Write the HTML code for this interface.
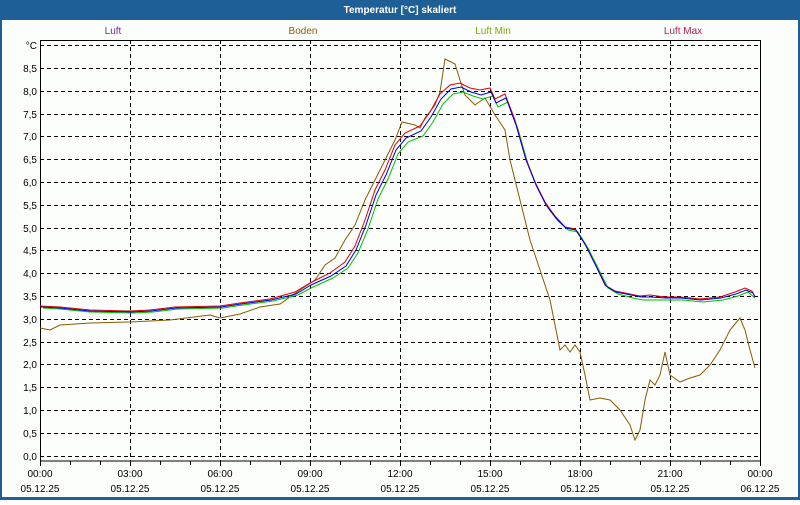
<!DOCTYPE html>
<html><head><style>
body{margin:0;width:800px;height:500px;overflow:hidden;background:#fff;font-family:"Liberation Sans",sans-serif}
</style></head><body>
<svg width="800" height="500" xmlns="http://www.w3.org/2000/svg" font-family="Liberation Sans, sans-serif" font-size="10">
<rect x="0" y="0" width="800" height="500" fill="#1e5f96"/>
<rect x="2" y="20" width="796" height="477" fill="#fcfefc"/>
<text x="400" y="13" text-anchor="middle" fill="#fff" font-weight="bold" font-size="10">Temperatur [°C] skaliert</text>
<text x="113" y="34" text-anchor="middle" fill="#6a2a9a">Luft</text>
<text x="303" y="34" text-anchor="middle" fill="#8a5a10">Boden</text>
<text x="493" y="34" text-anchor="middle" fill="#7fa800">Luft Min</text>
<text x="683" y="34" text-anchor="middle" fill="#b02050">Luft Max</text>
<g stroke="#000" stroke-dasharray="4,3" stroke-width="1">
<line x1="40" y1="45.5" x2="760" y2="45.5"/><line x1="40" y1="68.5" x2="760" y2="68.5"/><line x1="40" y1="91.5" x2="760" y2="91.5"/><line x1="40" y1="114.5" x2="760" y2="114.5"/><line x1="40" y1="136.5" x2="760" y2="136.5"/><line x1="40" y1="159.5" x2="760" y2="159.5"/><line x1="40" y1="182.5" x2="760" y2="182.5"/><line x1="40" y1="205.5" x2="760" y2="205.5"/><line x1="40" y1="228.5" x2="760" y2="228.5"/><line x1="40" y1="250.5" x2="760" y2="250.5"/><line x1="40" y1="273.5" x2="760" y2="273.5"/><line x1="40" y1="296.5" x2="760" y2="296.5"/><line x1="40" y1="319.5" x2="760" y2="319.5"/><line x1="40" y1="342.5" x2="760" y2="342.5"/><line x1="40" y1="364.5" x2="760" y2="364.5"/><line x1="40" y1="387.5" x2="760" y2="387.5"/><line x1="40" y1="410.5" x2="760" y2="410.5"/><line x1="40" y1="433.5" x2="760" y2="433.5"/><line x1="40" y1="456.5" x2="760" y2="456.5"/>
<line x1="130.5" y1="40" x2="130.5" y2="461"/><line x1="220.5" y1="40" x2="220.5" y2="461"/><line x1="310.5" y1="40" x2="310.5" y2="461"/><line x1="400.5" y1="40" x2="400.5" y2="461"/><line x1="490.5" y1="40" x2="490.5" y2="461"/><line x1="580.5" y1="40" x2="580.5" y2="461"/><line x1="670.5" y1="40" x2="670.5" y2="461"/>
</g>
<rect x="40.5" y="40.5" width="720" height="420.5" fill="none" stroke="#000"/>
<g stroke="#000"><path d="M40.5 461v5M70.5 461v4M100.5 461v4M130.5 461v5M160.5 461v4M190.5 461v4M220.5 461v5M250.5 461v4M280.5 461v4M310.5 461v5M340.5 461v4M370.5 461v4M400.5 461v5M430.5 461v4M460.5 461v4M490.5 461v5M520.5 461v4M550.5 461v4M580.5 461v5M610.5 461v4M640.5 461v4M670.5 461v5M700.5 461v4M730.5 461v4M760.5 461v5"/></g>
<g fill="#000" text-anchor="end">
<text x="37" y="49">°C</text><text x="37" y="72">8,5</text><text x="37" y="95">8,0</text><text x="37" y="118">7,5</text><text x="37" y="140">7,0</text><text x="37" y="163">6,5</text><text x="37" y="186">6,0</text><text x="37" y="209">5,5</text><text x="37" y="232">5,0</text><text x="37" y="254">4,5</text><text x="37" y="277">4,0</text><text x="37" y="300">3,5</text><text x="37" y="323">3,0</text><text x="37" y="346">2,5</text><text x="37" y="368">2,0</text><text x="37" y="391">1,5</text><text x="37" y="414">1,0</text><text x="37" y="437">0,5</text><text x="37" y="460">0,0</text>
</g>
<g fill="#000" text-anchor="middle">
<text x="40" y="477">00:00</text><text x="130" y="477">03:00</text><text x="220" y="477">06:00</text><text x="310" y="477">09:00</text><text x="400" y="477">12:00</text><text x="490" y="477">15:00</text><text x="580" y="477">18:00</text><text x="670" y="477">21:00</text><text x="760" y="477">00:00</text>
<text x="40" y="492">05.12.25</text><text x="130" y="492">05.12.25</text><text x="220" y="492">05.12.25</text><text x="310" y="492">05.12.25</text><text x="400" y="492">05.12.25</text><text x="490" y="492">05.12.25</text><text x="580" y="492">05.12.25</text><text x="670" y="492">05.12.25</text><text x="760" y="492">06.12.25</text>
</g>
<polyline fill="none" stroke="#8a5a00" points="40,328 50,330 60,325 90,323 130,322 170,320 210,315 220,318 240,314 260,307 280,304 300,290 315,280 325,265 335,258 345,240 355,225 365,200 375,180 385,160 395,140 402,122 415,125 420,128 425,118 435,105 440,92 445,59 455,64 460,80 465,95 475,105 485,98 495,115 505,130 510,160 520,200 530,240 540,270 550,300 555,325 560,350 565,345 570,352 575,345 580,352 585,375 590,400 600,398 610,400 620,410 630,425 635,440 640,430 645,400 650,380 655,385 660,375 665,352 670,375 680,382 690,378 700,375 710,365 720,350 730,330 740,318 745,330 750,350 755,368"/>
<polyline fill="none" stroke="#00c000" points="43,308 60,309 90,312 133,313 153,312 178,309 223,308 243,305 273,301 298,295 313,287 333,278 348,268 358,253 368,229 378,199 388,179 398,154 408,142 423,136 433,122 443,104 453,94 463,92 473,96 483,99 493,96 498,107 508,102 518,129 528,164 538,189 548,208 558,221 568,230 578,232 588,248 598,268 608,288 618,294 633,298 643,300 653,300 668,300 683,300 703,302 723,300 738,296 748,292 755,298"/>
<polyline fill="none" stroke="#e00000" points="40,306 60,307 90,310 130,311 150,310 175,307 220,306 240,303 270,299 295,292 310,283 330,273 345,262 355,246 365,220 375,190 385,170 395,145 405,133 420,126 430,112 440,94 450,85 460,83 470,88 480,90 490,88 495,99 505,94 515,120 525,156 535,182 545,202 555,216 565,227 575,229 585,244 595,264 605,285 615,291 630,294 640,296 650,295 665,297 680,297 700,299 720,297 735,292 745,288 752,291 755,297"/>
<polyline fill="none" stroke="#0000e0" points="41,307 60,308 90,311 131,312 151,311 176,308 221,307 241,304 271,300 296,294 311,285 331,276 346,266 356,250 366,225 376,195 386,175 396,150 406,138 421,131 431,117 441,99 451,89 461,87 471,92 481,95 491,92 496,103 506,98 516,125 526,160 536,185 546,205 556,218 566,228 576,230 586,246 596,266 606,286 616,292 631,295 641,297 651,297 666,298 681,298 701,300 721,298 736,294 746,290 753,293 755,297"/>
</svg>
</body></html>
